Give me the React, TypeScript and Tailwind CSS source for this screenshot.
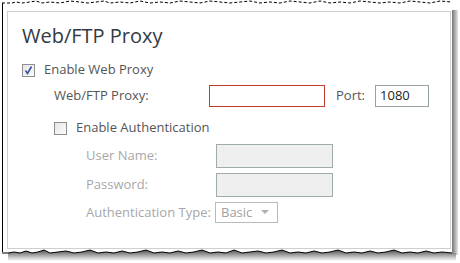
import React from "react";

const font = { fontFamily: '"Open Sans", "Noto Sans", sans-serif' };

function Check({ checked }: { checked?: boolean }) {
  return (
    <div className="w-[13px] h-[13px] border border-[#8f8f8f] bg-gradient-to-br from-[#e6e6e6] to-[#fbfbfb] flex items-center justify-center shrink-0">
      {checked && (
        <svg width="11" height="11" viewBox="0 0 11 11">
          <path d="M2.5 5.5 L4.5 8.5 L8.5 1.5" fill="none" stroke="#3a4fa0" strokeWidth="1.6" />
        </svg>
      )}
    </div>
  );
}

const torn =
  "8,6 14,5 20,6 26,4 32,6 38,5 44,3 50,6 58,5 66,4 74,6 82,5 90,3 98,6 106,5 114,6 122,4 130,6 138,5 146,3 154,6 162,5 170,6 178,4 186,6 194,5 202,3 210,6 218,5 226,6 234,3 242,6 250,5 258,4 266,6 274,5 282,3 290,6 298,5 306,6 314,4 322,6 330,5 338,3 346,6 354,5 362,6 370,4 378,6 386,5 394,3 402,6 410,5 418,6 426,4 434,6 442,5 452,6";

export default function App() {
  return (
    <div className="w-[460px] h-[263px] bg-white relative overflow-hidden" style={font}>
      {/* top torn edge */}
      <svg className="absolute left-0 top-0" width="460" height="5" viewBox="0 0 460 5">
        <polyline
          points="2,3 12,3 16,2 22,3 30,2 36,1 42,3 50,2 60,3 70,1 80,2 88,3 96,2 104,1 110,3 120,2 130,3 140,1 150,3 160,2 170,3 180,1 190,2 200,3 210,1 220,2 230,3 240,2 250,1 260,3 270,2 280,3 290,1 300,2 310,3 320,1 330,3 340,2 350,3 360,1 370,2 380,3 390,2 400,3 410,1 420,2 430,3 440,1 452,2"
          fill="none"
          stroke="#000"
          strokeWidth="1"
          strokeDasharray="3 2"
        />
      </svg>
      {/* frame */}
      <div className="absolute left-[2px] top-[3px] w-[450px] h-[249px] border-l border-black" />
      {/* right shadow */}
      <div className="absolute left-[452px] top-[10px] w-[6px] h-[245px] bg-gradient-to-r from-[#777] to-[#e6e6e6]" />
      {/* bottom torn edge + shadow */}
      <svg className="absolute left-0 top-[247px]" width="460" height="16" viewBox="0 0 460 16">
        <defs>
          <linearGradient id="sh" x1="0" y1="0" x2="0" y2="1">
            <stop offset="0" stopColor="#555" />
            <stop offset="1" stopColor="#fff" />
          </linearGradient>
        </defs>
        <path d={`M${torn.split(" ").join(" L")} L456 6 L456 14 L8 14 Z`} fill="url(#sh)" />
        <polyline points={`2,6 ${torn}`} fill="none" stroke="#000" strokeWidth="1" />
      </svg>

      {/* panel */}
      <div className="absolute left-[7px] top-[11px] w-[444px] h-[238px] border border-[#cfcfcf] bg-white">
        <div className="pl-[14px] pt-[10px]">
          <div className="text-[20px] leading-[28px] text-[#333a44]">Web/FTP Proxy</div>
          <div className="flex items-center mt-[12px] h-[16px]">
            <Check checked />
            <span className="ml-[9px] text-[13px] text-[#555]">Enable Web Proxy</span>
          </div>
          <div className="flex items-center mt-[7px] h-[22px] pl-[32px]">
            <span className="text-[13px] text-[#555] w-[155px]">Web/FTP Proxy:</span>
            <div className="w-[116px] h-[22px] border border-[#c0392b] bg-white" />
            <span className="ml-[11px] text-[13px] text-[#555]">Port:</span>
            <div className="ml-[10px] w-[54px] h-[22px] border border-[#98a2a2] bg-white flex items-center pl-[4px] text-[13px] text-[#222]">
              1080
            </div>
          </div>
          <div className="flex items-center mt-[13px] h-[16px] pl-[32px]">
            <Check />
            <span className="ml-[9px] text-[13px] text-[#555]">Enable Authentication</span>
          </div>
          <div className="pl-[64px] mt-[8px] flex flex-col gap-[5px]">
            <div className="flex items-center h-[24px]">
              <span className="text-[13px] text-[#a8a8a8] w-[130px]">User Name:</span>
              <div className="w-[117px] h-[24px] border border-[#9faaaa] bg-[#efefef]" />
            </div>
            <div className="flex items-center h-[24px]">
              <span className="text-[13px] text-[#a8a8a8] w-[130px]">Password:</span>
              <div className="w-[117px] h-[24px] border border-[#9faaaa] bg-[#efefef]" />
            </div>
            <div className="flex items-center h-[21px]">
              <span className="text-[13px] text-[#a8a8a8] w-[129px]">Authentication Type:</span>
              <div className="w-[63px] h-[21px] border border-[#b5bcbc] bg-white flex items-center pl-[5px] text-[13px] text-[#a0a0a0]">
                <span className="flex-1">Basic</span>
                <svg width="8" height="5" viewBox="0 0 8 5" className="mr-[8px]">
                  <path d="M0 0 L8 0 L4 4 Z" fill="#b0b0b0" />
                </svg>
              </div>
            </div>
          </div>
        </div>
      </div>
    </div>
  );
}
